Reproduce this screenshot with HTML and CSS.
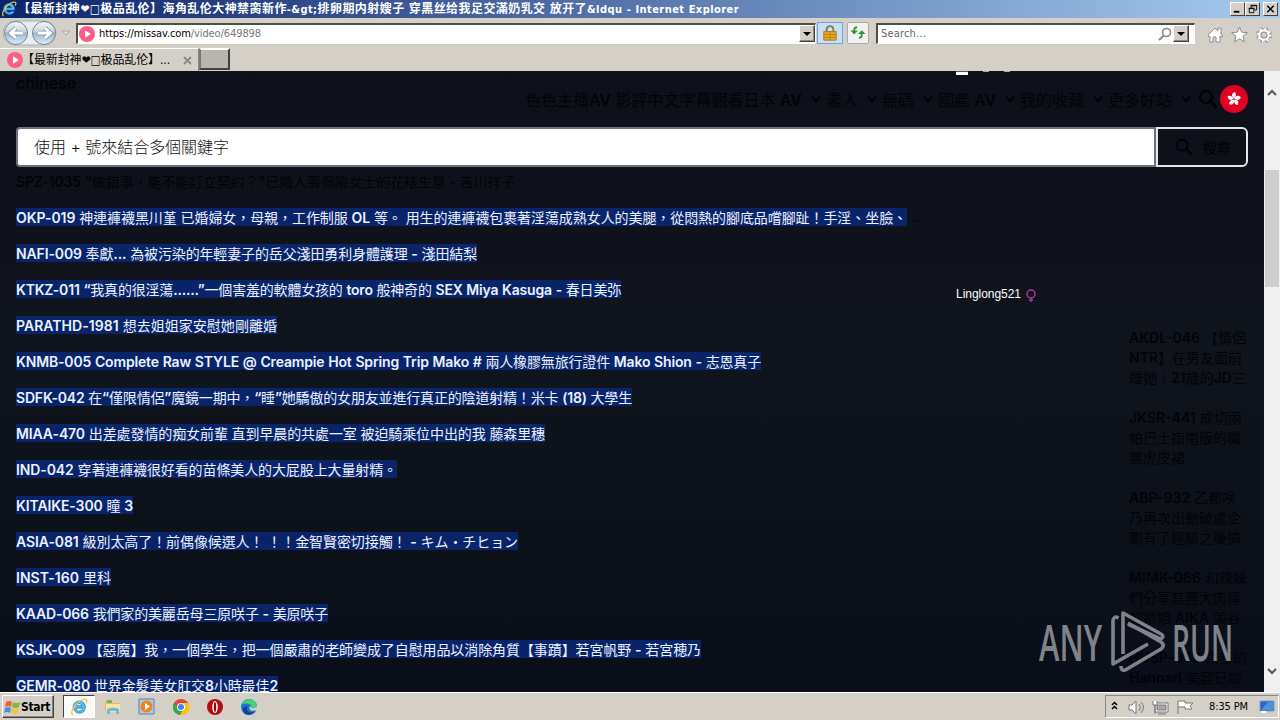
FILE: index.html
```html
<!DOCTYPE html>
<html lang="zh-Hant">
<head>
<meta charset="utf-8">
<title>Internet Explorer</title>
<link rel="stylesheet" href="styles.css">
</head>
<body>
<svg class="defs" width="0" height="0"><defs>
<symbol id="ie" viewBox="0 0 18 18"><path d="M15.500 10.200H6.200c.2 3.300 4.200 3.600 5.300 1.600h3.600c-2.100 5.300-12 4.300-12-3C3.100 1.300 15.900.2 15.500 10.200zM6.300 7.700h5.500C11.300 4.700 6.800 4.700 6.300 7.700z" fill="#52c0f2" stroke="#1678bd" stroke-width=".7"/><path d="M3 16.800C-1 15.500 5 4.500 13 1.500c3.800-1.200 4.500 1 3 3.700" fill="none" stroke="#f3c63b" stroke-width="1.300"/></symbol>
<symbol id="play" viewBox="0 0 16 16"><circle cx="8" cy="8" r="8" fill="#fb5d88"/><path d="M6 4.300 12 8l-6 3.700z" fill="#fff"/></symbol>
<symbol id="chev" viewBox="0 0 12 8"><path d="m2 2 4 4 4-4" fill="none" stroke="currentColor" stroke-width="2"/></symbol>
<symbol id="mag" viewBox="0 0 20 20"><circle cx="8" cy="8" r="6" fill="none" stroke="currentColor" stroke-width="2.200"/><path d="m12.500 12.500 6 6" stroke="currentColor" stroke-width="2.600"/></symbol>
</defs></svg>
<div class="screen">
<header class="title"><svg class="i16"><use href="#ie"/></svg><strong class="mixed" data-width="721">【最新封神❤□极品乱伦】海角乱伦大神禁脔新作-&amp;gt;排卵期内射嫂子 穿黑丝给我足交滿奶乳交 放开了&amp;ldqu - Internet Explorer</strong>
<div class="wins">
<svg viewBox="0 0 14 13"><path d="M3 9.500h6" stroke="#000" stroke-width="2"/></svg>
<svg viewBox="0 0 14 13"><path d="M5.500 5V2.500h6v5H9M5 3h7M3.500 5.500h5v5h-5zM3 6h6" fill="none" stroke="#000"/></svg>
<svg class="close" viewBox="0 0 14 13"><path d="m3.500 3 7 7m0-7-7 7" stroke="#000" stroke-width="1.600"/></svg>
</div></header>
<div class="tools">
<svg class="backfwd" viewBox="0 0 72 30"><defs><linearGradient id="orb" x2="0" y2="1"><stop stop-color="#f4f7fa"/><stop offset=".45" stop-color="#c8d4df"/><stop offset=".5" stop-color="#9fb4c7"/><stop offset="1" stop-color="#d8f2fc"/></linearGradient></defs><rect x="2" y="3" width="53" height="24" rx="12" fill="#e9edf0" stroke="#a7aeb4"/><circle cx="15" cy="15" r="11.500" fill="url(#orb)" stroke="#75869a"/><circle cx="43" cy="15" r="11.500" fill="url(#orb)" stroke="#75869a"/><path d="M22 15H10m5-5-5.500 5 5.500 5M37 15h12m-5-5 5.500 5-5.500 5" fill="none" stroke="#8594a7" stroke-width="4.500"/><path d="M22 15H10m5-5-5.500 5 5.500 5M37 15h12m-5-5 5.500 5-5.500 5" fill="none" stroke="#fff" stroke-width="2.800"/><path d="M61 13h8l-4 4z" fill="#e0ddd7" stroke="#aaa69f"/></svg>
<div class="address"><svg class="i16"><use href="#play"/></svg><span data-width="162">https://<i>missav.com</i><em>/video/649898</em></span><div class="drop"></div></div>
<svg class="lock" viewBox="0 0 25 21"><path d="M9 10V7c0-5 7-5 7 0v3" fill="none" stroke="#8c7a48" stroke-width="2"/><path d="M6 9h13v9H6z" fill="#e5a823" stroke="#ad7a1b"/><path d="M6 12h13M6 15h13M12.500 9v9" stroke="#ba8118"/></svg>
<svg class="refresh" viewBox="0 0 21 21"><path d="M9.500 4.500C6.500 4.500 6.500 6 6.500 9M11.500 15.500c3 0 3-1.500 3-5" fill="none" stroke="#2b963d" stroke-width="2"/><path d="m2.500 8 4 4 4-4zM10.500 11.500l4-4 4 4z" fill="#2b963d"/></svg>
<div class="search"><span data-width="45">Search...</span><svg viewBox="0 0 14 14"><circle cx="8.500" cy="5.500" r="4" fill="none" stroke="#888" stroke-width="1.600"/><path d="m6 8.500-5 4.500" stroke="#888" stroke-width="2"/></svg><div class="drop"></div></div>
<svg class="commands" viewBox="0 0 66 20"><g fill="#fff" stroke="#8c8c8c"><path d="m1 10 7-7 3 3V3h3v6l2 2-1 1-2-1v6H9v-5H6v5H3v-6l-1 1z"/><path d="m32.500 2 2.200 5.200 5.600.4-4.300 3.600 1.300 5.600-4.800-3-4.800 3 1.300-5.600-4.300-3.600 5.600-.4z"/></g><circle cx="57" cy="10" r="6" fill="none" stroke="#888" stroke-width="4" stroke-dasharray="2.700 2"/><circle cx="57" cy="10" r="4.500" fill="none" stroke="#888" stroke-width="4"/><circle cx="57" cy="10" r="4.700" fill="none" stroke="#fff" stroke-width="2.300"/><circle cx="57" cy="10" r="6" fill="none" stroke="#fff" stroke-width="3" stroke-dasharray="1.700 3"/></svg>
</div>
<div class="tabs"><div class="tab"><svg class="i16"><use href="#play"/></svg><span data-width="148">【最新封神❤□极品乱伦】...</span><svg class="x" viewBox="0 0 9 9"><path d="m1 1 7 7m0-7-7 7" stroke="#888" stroke-width="1.800"/></svg></div><div class="newtab"></div></div>
<div class="view">
<main class="page">
<div class="top"><span class="logo" data-width="60">chinese</span>
<nav><span class="mixed" data-width="277">色色主播AV 影評中文字幕觀看日本 AV</span><svg><use href="#chev"/></svg><span>素人</span><svg><use href="#chev"/></svg><span>無碼</span><svg><use href="#chev"/></svg><span class="mixed" data-width="58">國產 AV</span><svg><use href="#chev"/></svg><span>我的收藏</span><svg><use href="#chev"/></svg><span>更多好站</span><svg><use href="#chev"/></svg><svg class="find"><use href="#mag"/></svg>
<svg class="flag" viewBox="0 0 28 28"><defs><path id="petal" d="M14 13.500c-3-2-2.500-5.500.9-6.500 1.500 2 1.500 4.500-.9 6.500z"/></defs><circle cx="14" cy="14" r="14" fill="#df0024"/><g fill="#fff"><use href="#petal"/><use href="#petal" transform="rotate(72 14 14)"/><use href="#petal" transform="rotate(144 14 14)"/><use href="#petal" transform="rotate(216 14 14)"/><use href="#petal" transform="rotate(288 14 14)"/></g></svg></nav></div>
<div class="query"><div class="field"><span data-width="195">使用 + 號來結合多個關鍵字</span></div><div class="go"><svg><use href="#mag"/></svg><span>搜尋</span></div></div>
<div class="content">
<div class="list">
<div class="dim"><span class="mixed" data-width="499">SPZ-1035 "做錯事，能不能訂立契約？"已婚人壽保險女士的花裱生意 - 吉川祥子</span></div>
<div><span class="mixed" data-width="891">OKP-019 神連褲襪黑川堇 已婚婦女，母親，工作制服 OL 等。 用生的連褲襪包裹著淫蕩成熟女人的美腿，從悶熱的腳底品嚐腳趾！手淫、坐臉、</span><small>...</small></div>
<div><span class="mixed" data-width="461">NAFI-009 奉獻... 為被污染的年輕妻子的岳父淺田勇利身體護理 - 淺田結梨</span></div>
<div><span class="mixed" data-width="605">KTKZ-011 “我真的很淫蕩......”一個害羞的軟體女孩的 toro 般神奇的 SEX Miya Kasuga - 春日美弥</span></div>
<div><span class="mixed" data-width="261">PARATHD-1981 想去姐姐家安慰她剛離婚</span></div>
<div><span class="mixed" data-width="745">KNMB-005 Complete Raw STYLE @ Creampie Hot Spring Trip Mako # 兩人橡膠無旅行證件 Mako Shion - 志恩真子</span></div>
<div><span class="mixed" data-width="616">SDFK-042 在“僅限情侶”魔鏡一期中，“睡”她驕傲的女朋友並進行真正的陰道射精！米卡 (18) 大學生</span></div>
<div><span class="mixed" data-width="529">MIAA-470 出差處發情的痴女前輩 直到早晨的共處一室 被迫騎乘位中出的我 藤森里穗</span></div>
<div><span class="mixed" data-width="381">IND-042 穿著連褲襪很好看的苗條美人的大屁股上大量射精。</span></div>
<div><span class="mixed" data-width="117">KITAIKE-300 瞳 3</span></div>
<div><span class="mixed" data-width="502">ASIA-081 級別太高了！前偶像候選人！ ！！金智賢密切接觸！ - キム・チヒョン</span></div>
<div><span class="mixed" data-width="95">INST-160 里科</span></div>
<div><span class="mixed" data-width="312">KAAD-066 我們家的美麗岳母三原咲子 - 美原咲子</span></div>
<div><span class="mixed" data-width="685">KSJK-009 【惡魔】我，一個學生，把一個嚴肅的老師變成了自慰用品以消除角質【事蹟】若宮帆野 - 若宮穂乃</span></div>
<div><span class="mixed" data-width="262">GEMR-080 世界金髮美女肛交8小時最佳2</span></div>
</div>
<div class="author"><span data-width="65">Linglong521</span><svg viewBox="0 0 10 13"><circle cx="5" cy="5" r="4" fill="none" stroke="#a63c94" stroke-width="1.500"/><path d="M5 9v4M3 11h4" stroke="#a63c94" stroke-width="1.300"/></svg></div>
<aside>
<p class="mixed">AKDL-046 【情侶<br>NTR】在男友面前<br>睡她｜21歲的JD三</p>
<p class="mixed">JKSR-441 成切兩<br>帕巴士指南版的職<br>業虎皮裙</p>
<p class="mixed">ABP-932 乙都咲<br>乃再次出動破處企<br>劃有了經驗之後搞</p>
<p class="mixed">MIMK-066 和辣妹<br>們分享禁黑大肉棒<br>的婚姻 AIKA 美谷</p>
<p class="mixed">HUSP-033 京都的<br>Hannari 美容已婚</p>
</aside>
</div>
<div class="scrap"><i></i><b></b><b></b></div>
<div class="mark"><span data-width="63">ANY</span><svg viewBox="0 0 56 62"><g fill="none" stroke="currentColor" stroke-width="3.600" stroke-linejoin="round"><path d="M8.500 8C5 6 3 8 3 11v43L38 34"/><path d="M13 44V3l38 21c4 2 1 6-3 4L18 14"/><path d="M11 56c0 5 3 5 6 3l34-20c3-2 3-5 0-7L18 13"/></g></svg><span data-width="61">RUN</span></div>
</main>
<div class="scroll"><svg viewBox="0 0 16 16"><path d="m4 10 4-4 4 4" /></svg><div class="thumb"></div><svg viewBox="0 0 16 16"><path d="m4 6 4 4 4-4"/></svg></div>
</div>
<footer><div class="start"><svg viewBox="0 0 16 16"><path d="M2 3q3-2 6 0L7 8Q4 6 1 8z" fill="#ef632e"/><path d="M9 3q3 2 7 0l-1 5q-3 2-7 0z" fill="#7dbb41"/><path d="M1 9q3-2 6 0l-1 5q-3-2-6 0z" fill="#4b91d9"/><path d="M8 9q3 2 7 0l-1 5q-3 2-7 0z" fill="#f3c63a"/></svg><strong data-width="29">Start</strong></div>
<div class="apps"><div class="active"><svg><use href="#ie"/></svg></div>
<svg viewBox="0 0 18 18"><path d="M1 3h6l1 2h8v9H1z" fill="#e9bd52"/><path d="M3 2h5v3H3z" fill="#6ab463"/><path d="M2 6h14v8H2z" fill="#f8e6a0"/><path d="M3 16v-5q6-3 12 0v5h-3v-3H6v3z" fill="#70b9df"/></svg>
<svg viewBox="0 0 18 18"><path d="M1 1h15v15H1z" fill="#a9cbe8" stroke="#5686b5"/><circle cx="8.500" cy="8.500" r="6" fill="#f58216"/><path d="m7 5 5 3.500L7 12z" fill="#fff"/></svg>
<svg viewBox="0 0 18 18"><circle cx="9" cy="9" r="8" fill="#ea4335"/><path d="M2 5A8 8 0 0 0 8 17l4-7-6 0z" fill="#34a853"/><path d="M8 17A8 8 0 0 0 16.500 5H9l3 5z" fill="#fbc116"/><circle cx="9" cy="9" r="4" fill="#fff"/><circle cx="9" cy="9" r="3" fill="#4285f4"/></svg>
<svg viewBox="0 0 18 18"><circle cx="9" cy="9" r="8" fill="#b50c12"/><ellipse cx="9" cy="9" rx="2.800" ry="6" fill="#fff"/><ellipse cx="9" cy="9" rx="1.200" ry="5" fill="#8f0b0f"/></svg>
<svg viewBox="0 0 18 18"><circle cx="9" cy="9" r="8" fill="#1479ce"/><path d="M2 6C5-1 17 0 17 8c0 4-6 4-6 2 1-5-5-5-9-4z" fill="#4dcc79"/><path d="M7 9c-1 5 4 7 8 4-4 6-12 4-12-1 0-3 3-4 5-4z" fill="#123f94"/><path d="M10 8c-2 4 2 6 7 4v-3c-3 2-6 2-7-1z" fill="#d4d0c8"/></svg></div>
<div class="tray"><svg viewBox="0 0 92 20"><path d="m4 8 2.500-2.500L9 8M4 12l2.500-2.500L9 12" fill="none" stroke="#000" stroke-width="1.500"/><g fill="#fff" stroke="#777"><path d="M21 8h3l4-4v13l-4-4h-3z"/><path d="M31 7q3 3 0 7M33 5q5 5 0 11" fill="none"/><path d="M47 6h13v9H47z"/><path d="M49 8h9v5h-9z" fill="#aaa"/><path d="M50 17h8M45 4v4h4V4m-2 4v9" /><path d="M70 17V4h7v2h8l-3 3 2 3h-7v-2h-7"/></g></svg><span data-width="39">8:35 PM</span><svg class="desktop" viewBox="0 0 16 14"><path d="M1 1h14v10H1z" fill="#2769bd" stroke="#819db9"/><path d="m2 10 7-8h5v8z" fill="#4c93df"/><path d="M2 12h5" stroke="#fff" stroke-width="2"/></svg></div></footer>
</div>
<script src="fit.js"></script>
</body>
</html>
```
FILE: styles.css
```css
*{box-sizing:border-box}
body{margin:0;background:#000;overflow:hidden}
svg{display:block;flex:none}
.defs{position:absolute}
.screen{width:1280px;height:720px;display:flex;flex-direction:column;overflow:hidden;font:11px "DejaVu Sans Condensed","DejaVu Sans","Noto Sans CJK SC",sans-serif;background:#d4d0c8}
.screen span,.screen strong{white-space:nowrap}
.i16{width:16px;height:16px}
.title{height:18px;display:flex;align-items:center;background:linear-gradient(90deg,#0a246a,#a6caf0);color:#fff;padding:0 2px 0 1px}
.title>strong{font:bold 12px/18px "DejaVu Sans Condensed","DejaVu Sans","Noto Sans CJK SC",sans-serif;margin-left:1px;padding-top:1px}
.title .latin{font-size:11px}
.wins{display:flex;margin-left:auto}
.wins svg{width:15px;height:14px;background:#d4d0c8;border:1px solid;border-color:#fff #404040 #404040 #fff}
.wins .close{margin-left:3px}
.tools{height:30px;display:flex;align-items:center}
.backfwd{width:72px;height:30px;margin-left:1px}
.address,.search{height:21px;background:#fff;border:1px solid #fff;border-top:2px solid #504c48;border-left:2px solid #504c48;display:flex;align-items:center}
.address{width:740px;margin-left:3px;padding-left:1px}
.address span{margin-left:4px}
.address i{font-style:normal}
.address em{font-style:normal;color:#777}
.drop{width:16px;height:17px;background:#d4d0c8;border:1px solid;border-color:#fff #404040 #404040 #fff;box-shadow:inset -1px -1px #888;margin-left:auto;display:flex;align-items:center;justify-content:center}
.drop:before{content:"";border:4px solid transparent;border-top-color:#000;border-bottom:0}
.lock{width:26px;height:22px;margin-left:1px;background:#c7dff7;border:1px solid #6da5e1}
.refresh{width:22px;height:22px;margin-left:4px;background:#f1f2ef;border:1px solid #aaa;border-radius:2px}
.search{width:319px;margin-left:7px;padding:0 5px 0 3px;color:#666}
.search svg{width:14px;height:14px;margin-left:auto}
.search .drop{margin-left:1px}
.commands{width:66px;height:20px;margin:4px 0 0 12px}
.tabs{height:23px;display:flex;align-items:flex-start}
.tab{width:199px;height:23px;display:flex;align-items:center;padding-left:7px;border-top:1px solid #fff;border-right:1px solid #888;font-size:12px}
.tab span{margin:-3px 0 0 -1px}
.tab .x{width:9px;height:9px;margin-left:13px}
.newtab{width:31px;height:22px;background:#b8b4ae;border:2px solid;border-color:#fff #404040 #404040 #777}
.view{height:621px;display:flex}
.page{position:relative;width:1264px;height:621px;overflow:hidden;background:linear-gradient(#0e101a,#10141c 45%,#0a0e18);font-family:Inter,"Noto Sans CJK TC",sans-serif;color:#030407}
.page .latin{font-weight:600}
.top{height:56px;display:flex;justify-content:space-between;padding:0 16px}
.logo{font-size:16px;line-height:24px;font-weight:600}
nav{display:flex;align-items:center;font-size:16px;font-weight:400}
nav span{margin-top:-1px}
nav>svg{width:12px;height:8px;margin:0 4px 0 8px}
nav .find{width:20px;height:20px;margin:0 2px 0 2px;stroke-width:3}
nav .find+.flag{width:28px;height:28px;margin:0}
.query{height:40px;margin:0 16px;display:flex}
.field{flex:1;background:#fff;border:2px solid #6b7280;border-radius:4px 0 0 4px;padding-left:16px;font-size:16px;line-height:37px;color:#111;font-weight:300}
.go{width:92px;border:2px solid #e5e7eb;border-radius:0 6px 6px 0;display:flex;align-items:center;padding-left:17px;font-size:14px;font-weight:500}
.go svg{width:18px;height:18px;margin-right:10px}
.content{display:flex;padding:4px 16px 0;font-size:14px;line-height:20px;font-weight:400}
.list{width:940px;display:flex;flex-direction:column;gap:16px;flex:none}
.list>div{height:20px;display:flex;align-items:center}
.list div>span{height:18px;line-height:19px;background:#0a246a;color:#e9f2ff}
.list .dim>span{background:none;color:inherit}
.list small{font-size:14px}
.author{width:173px;height:20px;margin-top:113px;display:flex;align-items:center;color:#fff;font:12px "Liberation Sans",sans-serif;flex:none}
.author svg{width:10px;height:13px;margin:3px 0 0 5px}
aside{padding-top:157px;white-space:nowrap}
aside p{margin:0 0 20px}
.scrap{position:absolute;left:956px;top:0;display:flex;gap:15px;height:4px}
.scrap i{width:12px;height:4px;background:#fff;border-top:1px solid #555}
.scrap b{width:6px;height:1px;background:#aaa}
.mark{position:absolute;left:1039px;top:539px;height:62px;display:flex;align-items:center;color:#ced1d5;opacity:.6;font:600 51px/60px "Open Sans",sans-serif}
.mark span{display:block;transform-origin:left center}
.mark svg{width:56px;height:62px;margin:0 4px 0 8px}
.mark span:last-child{margin-left:2px}
.scroll{width:16px;background:#f0f0f0;display:flex;flex-direction:column;padding-top:14px}
.scroll svg{width:16px;height:16px;fill:none;stroke:#555;stroke-width:2}
.thumb{height:117px;margin:69px 1px 376px;background:#cdcdcd}
footer{height:28px;border-top:1px solid #fff;display:flex;align-items:center;background:#d4d0c8}
.start{width:52px;height:23px;margin-left:2px;display:flex;align-items:center;border:1px solid;border-color:#fff #404040 #404040 #fff;box-shadow:inset -1px -1px #888;padding-left:1px}
.start svg{width:16px;height:16px}
.start strong{font:bold 12px "DejaVu Sans Condensed","DejaVu Sans",sans-serif;margin-left:1px}
.apps{display:flex;align-items:center;margin-left:9px}
.apps svg{width:18px;height:18px}
.apps>svg{margin-left:16px}
.apps .active+svg{margin-left:9px}
.active{width:32px;height:23px;background:#fafafa;border:1px solid;border-color:#404040 #fff #fff #404040;display:flex;align-items:center;justify-content:center}
.tray{width:174px;height:23px;margin:0 1px 0 auto;border:1px solid;border-color:#888 #fff #fff #888;display:flex;align-items:center}
.tray svg{width:92px;height:20px;margin-left:2px}
.tray span{margin-left:9px}
.tray .desktop{width:16px;height:14px;margin-left:11px}
```
FILE: fit.js
```js
// Wraps Latin runs so they can carry a different weight from the CJK text.
document.querySelectorAll('.mixed').forEach(function (el) {
  Array.from(el.childNodes).forEach(function (node) {
    if (node.nodeType !== 3) return;
    var parts = document.createDocumentFragment();
    node.textContent.split(/([\x21-\x7e\u201c\u201d]+)/).forEach(function (run, i) {
      if (!run) return;
      if (i % 2) {
        var latin = document.createElement('span');
        latin.className = 'latin';
        latin.textContent = run;
        parts.appendChild(latin);
      } else {
        parts.appendChild(document.createTextNode(run));
      }
    });
    el.replaceChild(parts, node);
  });
});

// Sets tracking so each label occupies its declared width.
document.querySelectorAll('[data-width]').forEach(function (el) {
  var target = Number(el.dataset.width);
  var natural = el.getBoundingClientRect().width;
  if (el.parentElement.classList.contains('mark')) {
    el.style.width = target + 'px';
    el.style.transform = 'scaleX(' + target / natural + ')';
  } else {
    el.style.letterSpacing = (target - natural) / Array.from(el.textContent).length + 'px';
  }
});
```
